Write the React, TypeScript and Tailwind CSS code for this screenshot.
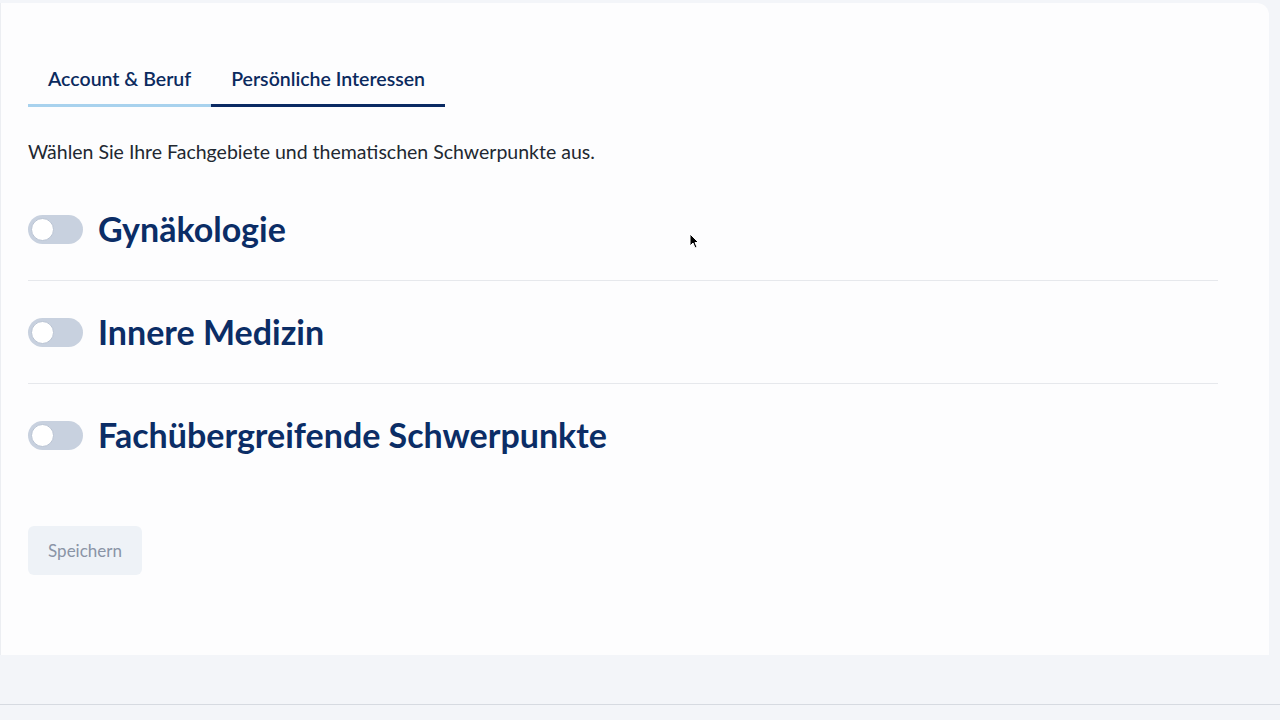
import React from 'react';

const font = { fontFamily: 'Lato, "Noto Sans", sans-serif' };

const topics = ['Gynäkologie', 'Innere Medizin', 'Fachübergreifende Schwerpunkte'];

const Toggle = () => (
    <div className="relative w-[55px] h-[29px] shrink-0 rounded-full bg-[#c8d1df]">
        <div className="absolute left-[3px] top-[3px] h-[23px] w-[23px] rounded-full bg-white border border-[#b9c3d3]" />
    </div>
);

export default function App() {
    return (
        <div className="relative min-h-[720px] w-full bg-[#f3f5f9] text-[#0b2a5e]" style={font}>
            <div className="mr-[11px] pt-[3px]">
                <div className="h-[652px] rounded-tr-xl bg-[#fdfdfe] border-l border-[#eceef2] pl-[27px] pr-[28px] pt-[64px]">
                    {/* tabs */}
                    <div className="flex">
                        <div className="px-5 pb-[13px] border-b-[3px] border-[#a8d2ee] text-[19.5px] leading-6 font-semibold">
                            Account &amp; Beruf
                        </div>
                        <div className="px-5 pb-[13px] border-b-[3px] border-[#0a2a63] text-[19.5px] leading-6 font-semibold">
                            Persönliche Interessen
                        </div>
                    </div>

                    <p className="mt-[33px] text-[19.5px] leading-6 text-[#222831]">
                        Wählen Sie Ihre Fachgebiete und thematischen Schwerpunkte aus.
                    </p>

                    <div className="mt-[14px] w-[1190px]">
                        {topics.map((t, i) => (
                            <div
                                key={t}
                                className={
                                    i < topics.length - 1
                                        ? 'flex items-center gap-[15px] py-[31px] border-b border-[#e6e8ec]'
                                        : 'flex items-center gap-[15px] py-[31px]'
                                }
                            >
                                <Toggle />
                                <span className="text-[34px] leading-10 font-bold text-[#0b2d66]">{t}</span>
                            </div>
                        ))}
                    </div>

                    <button className="mt-[40px] h-[49px] w-[114px] rounded-md bg-[#eef2f7] text-[17px] text-[#8a94a6]">
                        Speichern
                    </button>
                </div>
            </div>
            <div className="mt-[49px] h-px bg-[#d6dae1]" />

            {/* mouse pointer */}
            <svg className="absolute left-[689px] top-[233px]" width="10" height="16" viewBox="0 0 10 16">
                <path d="M1 1 L1 13 L4 10 L6 15 L8 14 L6 9.5 L9.5 9.5 Z" fill="#000" stroke="#fff" strokeWidth="1" />
            </svg>
        </div>
    );
}
